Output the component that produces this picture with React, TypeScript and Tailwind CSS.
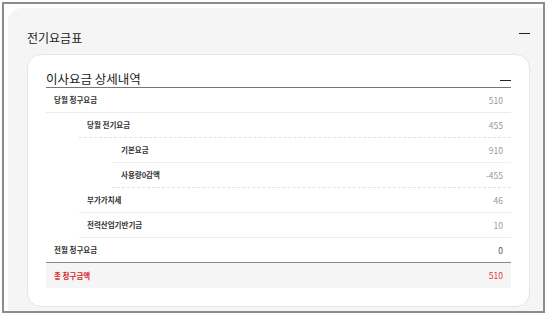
import React from 'react';

type Row = {
  label: string;
  value: string;
  indent: 0 | 1 | 2;
  line: string;
  valueColor?: string;
  total?: boolean;
};

const rows: Row[] = [
  { label: '당월 청구요금', value: '510', indent: 0, line: 'border-b border-solid border-[#ececec]' },
  { label: '당월 전기요금', value: '455', indent: 1, line: 'border-b border-dashed border-[#e2e2e2]' },
  { label: '기본요금', value: '910', indent: 2, line: 'border-b border-solid border-[#f0f0f0]' },
  { label: '사용량0감액', value: '-455', indent: 2, line: 'border-b border-dashed border-[#e2e2e2]' },
  { label: '부가가치세', value: '46', indent: 1, line: 'border-b border-solid border-[#ececec]' },
  { label: '전력산업기반기금', value: '10', indent: 1, line: 'border-b border-solid border-[#ececec]' },
  { label: '전월 청구요금', value: '0', indent: 0, line: 'border-b border-solid border-[#8a8a8a]', valueColor: 'text-[#555]' },
  { label: '총 청구금액', value: '510', indent: 0, line: '', total: true },
];

const indentClass = ['ml-0 pl-[8px]', 'ml-[33px] pl-[8px]', 'ml-[66px] pl-[9px]'];

const Minus = ({ className }: { className?: string }) => (
  <span className={`block w-[11px] h-[1.5px] bg-[#222] ${className ?? ''}`} />
);

export default function App() {
  return (
    <div className="w-[549px] h-[317px] bg-white pt-[2px] pl-[2px] font-['Noto_Sans_CJK_KR','Noto_Sans',sans-serif]">
      <div className="w-[543px] h-[311px] border-2 border-[#8c8c8c] overflow-hidden bg-white pl-[4px] pt-[4px]">
        <div className="h-[320px] rounded-tl-[14px] bg-[#f5f5f5] pl-[19px] pr-[13px] pt-[22px]">
          <div className="flex justify-between items-center h-4">
            <h2 className="text-[12px] leading-4 text-[#222] font-normal">전기요금표</h2>
            <Minus className="mb-[9px]" />
          </div>

          <div className="mt-2 bg-white border border-[#e6e6e6] rounded-[14px] px-[18px] pt-[15px] pb-[18px]">
            <div className="flex justify-between items-center h-[18px] border-b border-[#777]">
              <h3 className="text-[12.5px] leading-[18px] text-[#222]">이사요금 상세내역</h3>
              <Minus className="mt-[4px]" />
            </div>

            {rows.map((r) => (
              <div
                key={r.label}
                className={`flex items-center justify-between h-[25px] pr-[8px] ${indentClass[r.indent]} ${r.line} ${
                  r.total ? 'bg-[#f5f5f5]' : ''
                }`}
              >
                <span
                  className={`text-[7.5px] font-semibold leading-none ${r.total ? 'text-[#d9262c]' : 'text-[#333]'}`}
                >
                  {r.label}
                </span>
                <span
                  className={`text-[8.5px] leading-none ${
                    r.total ? 'text-[#e0393e]' : r.valueColor ?? 'text-[#999]'
                  }`}
                >
                  {r.value}
                </span>
              </div>
            ))}
          </div>
        </div>
      </div>
    </div>
  );
}
